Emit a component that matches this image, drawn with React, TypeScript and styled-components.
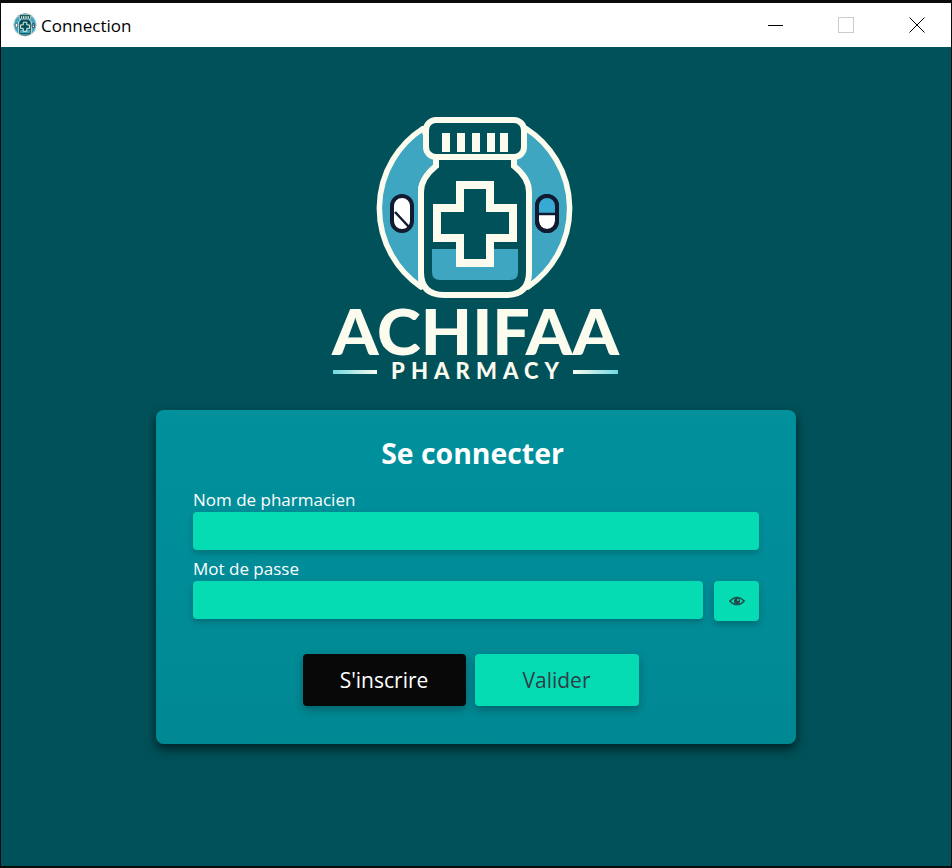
import { createGlobalStyle } from 'styled-components'
import styled from 'styled-components'

const GlobalStyle = createGlobalStyle`
    html, body {
        margin: 0;
        padding: 0;
        background: #0b0b0b;
    }
`

const Frame = styled.div`
    width: 952px;
    height: 868px;
    box-sizing: border-box;
    padding: 3px 1px 2px 1px;
    display: flex;
    flex-direction: column;
    background: #0b0b0b;
    font-family: "Open Sans", "Noto Sans", sans-serif;
`

const TitleBar = styled.header`
    height: 44px;
    flex: none;
    display: flex;
    align-items: center;
    padding-left: 12px;
    background: #ffffff;
`

const TitleText = styled.span`
    margin-left: 4px;
    font-size: 17px;
    color: #000000;
    flex: 1;
`

const WindowButton = styled.button`
    width: 71px;
    height: 44px;
    padding: 0 0 0 2px;
    border: 0;
    background: transparent;
    display: flex;
    align-items: center;
    justify-content: center;
`

const Main = styled.main`
    flex: 1;
    display: flex;
    flex-direction: column;
    align-items: center;
    padding-top: 53px;
    background: #005159;
`

const LogoImage = styled.svg`
    width: 310px;
    height: 290px;
    flex: none;
`

const Card = styled.form`
    width: 640px;
    height: 334px;
    margin-top: 20px;
    box-sizing: border-box;
    padding: 23px 37px 0 37px;
    border-radius: 8px;
    background: linear-gradient(180deg, #00919d 0%, #008893 100%);
    box-shadow: 0 5px 11px rgba(0, 0, 0, 0.6);
`

const Heading = styled.h1`
    margin: 0 7px 16px 0;
    font-size: 28.4px;
    line-height: 40px;
    font-weight: 700;
    color: #ffffff;
    text-align: center;
`

const FieldLabel = styled.label`
    display: block;
    height: 23px;
    font-size: 17px;
    line-height: 22px;
    color: #ffffff;
`

const Row = styled.div`
    display: flex;
    gap: 11px;
    margin-bottom: 8px;
`

const TextField = styled.input`
    flex: 1;
    min-width: 0;
    height: 38px;
    box-sizing: border-box;
    border: 0;
    border-radius: 4px;
    background: #05dcb4;
    box-shadow: 0 3px 6px rgba(0, 0, 0, 0.22);
`

const EyeButton = styled.button`
    width: 45px;
    height: 40px;
    flex: none;
    padding: 0;
    border: 0;
    border-radius: 4px;
    background: #05dcb4;
    box-shadow: 0 3px 7px rgba(0, 0, 0, 0.25);
    display: flex;
    align-items: center;
    justify-content: center;
`

const ButtonRow = styled.div`
    display: flex;
    justify-content: center;
    gap: 9px;
    margin: 33px 11px 0 0;
`

const ActionButton = styled.button<{ $dark?: boolean }>`
    width: ${(p) => (p.$dark ? '163px' : '164px')};
    height: 52px;
    border: 0;
    border-radius: 4px;
    background: ${(p) => (p.$dark ? '#080808' : '#05dcb4')};
    color: ${(p) => (p.$dark ? '#ffffff' : '#2f3d47')};
    font-family: inherit;
    font-size: 21px;
    box-shadow: 0 4px 8px rgba(0, 0, 0, 0.28);
`

const CREAM = '#fbfbee'
const BLUE = '#3fa6c2'
const TEAL = '#005159'

// bottle + pills, drawn in page coordinates of the big logo
const Emblem = () => (
    <g>
        <path
            d="M423 128.5 A95 95 0 0 0 421 287 L421 189 Q421 180 436 166 L436 158 Z"
            fill={BLUE}
            stroke={CREAM}
            strokeWidth="5.5"
            strokeLinejoin="round"
        />
        <path
            d="M526 128.5 A95 95 0 0 1 528 287 L528 189 Q528 180 513 166 L513 158 Z"
            fill={BLUE}
            stroke={CREAM}
            strokeWidth="5.5"
            strokeLinejoin="round"
        />
        <path
            d="M436 155 L436 166 Q421 178 421 192 L421 272 Q421 295 444 295 L506 295 Q529 295 529 272 L529 192 Q529 178 514 166 L514 155 Z"
            fill={TEAL}
            stroke={CREAM}
            strokeWidth="6"
        />
        <rect x="426" y="120" width="98" height="37" rx="10" fill={TEAL} stroke={CREAM} strokeWidth="6" />
        <g fill={CREAM}>
            <rect x="442" y="133" width="8" height="19" />
            <rect x="457" y="133" width="8" height="19" />
            <rect x="472" y="133" width="8" height="19" />
            <rect x="487" y="133" width="8" height="19" />
            <rect x="500" y="133" width="8" height="19" />
        </g>
        <path d="M432 249 H518 V272 Q518 280 510 280 H440 Q432 280 432 272 Z" fill={BLUE} />
        <path
            d="M460 185 H490 V208 H513 V238 H490 V263 H460 V238 H437 V208 H460 Z"
            fill={TEAL}
            stroke={CREAM}
            strokeWidth="8"
        />
        <rect x="392" y="196" width="20" height="35" rx="10" fill="#ffffff" stroke="#101a30" strokeWidth="4" />
        <path d="M395 212 L409 227" stroke="#101a30" strokeWidth="2.5" />
        <rect x="537" y="196" width="20" height="35" rx="10" fill="#ffffff" stroke="#101a30" strokeWidth="4" />
        <path d="M539 198 H555 V214 H539 Z" fill="#38a9d2" />
        <path d="M538 214 H556" stroke="#101a30" strokeWidth="2.5" />
        <rect x="537" y="196" width="20" height="35" rx="10" fill="none" stroke="#101a30" strokeWidth="4" />
    </g>
)

const Logo = () => (
    <LogoImage viewBox="321 100 310 290" role="img" aria-label="Achifaa Pharmacy">
        <defs>
            <linearGradient id="ruleLeft" x1="0" x2="1" y1="0" y2="0">
                <stop offset="0" stopColor="#6fd9e2" />
                <stop offset="1" stopColor={CREAM} />
            </linearGradient>
            <linearGradient id="ruleRight" x1="0" x2="1" y1="0" y2="0">
                <stop offset="0" stopColor={CREAM} />
                <stop offset="1" stopColor="#6fd9e2" />
            </linearGradient>
        </defs>
        <Emblem />
        <text
            x="332"
            y="355"
            textLength="287"
            lengthAdjust="spacingAndGlyphs"
            fill={CREAM}
            fontFamily="Lato, 'Open Sans', sans-serif"
            fontWeight="900"
            fontSize="62"
        >
            ACHIFAA
        </text>
        <text
            x="391"
            y="379"
            textLength="168"
            fill={CREAM}
            fontFamily="Lato, 'Open Sans', sans-serif"
            fontWeight="900"
            fontSize="22"
        >
            PHARMACY
        </text>
        <rect x="333" y="370" width="44" height="4" fill="url(#ruleLeft)" />
        <rect x="573" y="370" width="45" height="4" fill="url(#ruleRight)" />
    </LogoImage>
)

const AppIcon = () => (
    <svg width="24" height="24" viewBox="372 110 206 198">
        <circle cx="475" cy="208" r="97" fill={TEAL} />
        <Emblem />
    </svg>
)

const EyeIcon = () => (
    <svg width="16" height="10" viewBox="0 0 16 10">
        <path d="M0.7 5 Q8 -2.4 15.3 5 Q8 12.4 0.7 5 Z" fill="none" stroke="#24484a" strokeWidth="1.2" />
        <circle cx="8" cy="5" r="3" fill="#24484a" />
        <circle cx="9" cy="4" r="1" fill="#05dcb4" />
    </svg>
)

const App = () => {
    return (
        <Frame>
            <GlobalStyle />
            <TitleBar>
                <AppIcon />
                <TitleText>Connection</TitleText>
                <WindowButton aria-label="minimize">
                    <svg width="21" height="16" viewBox="0 0 21 16">
                        <path d="M4 8.5 H19" stroke="#000000" strokeWidth="1" />
                    </svg>
                </WindowButton>
                <WindowButton aria-label="maximize">
                    <svg width="16" height="16" viewBox="0 0 16 16">
                        <rect x="0.5" y="0.5" width="15" height="15" fill="none" stroke="#cccccc" strokeWidth="1" />
                    </svg>
                </WindowButton>
                <WindowButton aria-label="close">
                    <svg width="16" height="16" viewBox="0 0 16 16">
                        <path d="M0.5 0.5 L15.5 15.5 M15.5 0.5 L0.5 15.5" stroke="#000000" strokeWidth="1" />
                    </svg>
                </WindowButton>
            </TitleBar>
            <Main>
                <Logo />
                <Card>
                    <Heading>Se connecter</Heading>
                    <FieldLabel>Nom de pharmacien</FieldLabel>
                    <Row>
                        <TextField type="text" />
                    </Row>
                    <FieldLabel>Mot de passe</FieldLabel>
                    <Row>
                        <TextField type="password" />
                        <EyeButton type="button" aria-label="show password">
                            <EyeIcon />
                        </EyeButton>
                    </Row>
                    <ButtonRow>
                        <ActionButton type="button" $dark>S'inscrire</ActionButton>
                        <ActionButton type="button">Valider</ActionButton>
                    </ButtonRow>
                </Card>
            </Main>
        </Frame>
    )
}

export default App
